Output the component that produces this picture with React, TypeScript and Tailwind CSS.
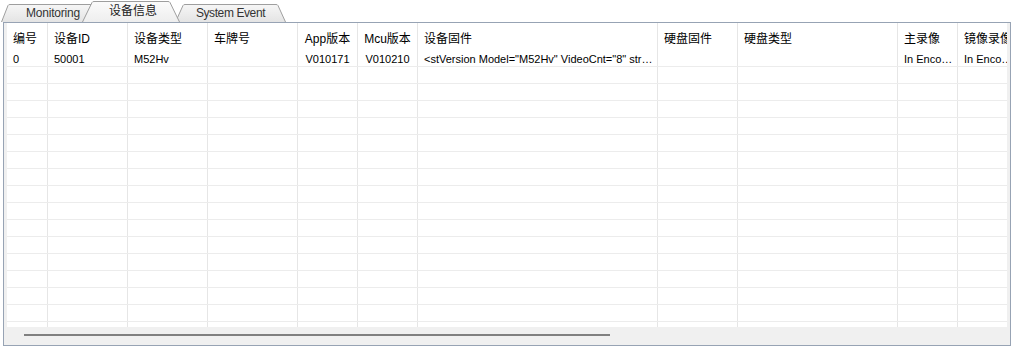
import React from "react";

type Col = { w: string; h: string; d: string; center?: boolean };

const cols: Col[] = [
  { w: "w-[41px]", h: "编号", d: "0" },
  { w: "w-[80px]", h: "设备ID", d: "50001" },
  { w: "w-[80px]", h: "设备类型", d: "M52Hv" },
  { w: "w-[90px]", h: "车牌号", d: "" },
  { w: "w-[60px]", h: "App版本", d: "V010171", center: true },
  { w: "w-[60px]", h: "Mcu版本", d: "V010210", center: true },
  { w: "w-[240px]", h: "设备固件", d: '<stVersion Model="M52Hv" VideoCnt="8" str…' },
  { w: "w-[80px]", h: "硬盘固件", d: "" },
  { w: "w-[160px]", h: "硬盘类型", d: "" },
  { w: "w-[60px]", h: "主录像", d: "In Enco…" },
  { w: "w-[80px]", h: "镜像录像", d: "In Enco…" },
];

function TabShape({ W, H, s, id, selected }: { W: number; H: number; s: number; id: string; selected?: boolean }) {
  const d = `M0.5 ${H} L${s} 1.5 Q${s + 0.5} 0.5 ${s + 2} 0.5 L${W - s - 2} 0.5 Q${W - s - 0.5} 0.5 ${W - s} 1.5 L${W - 0.5} ${H}`;
  return (
    <svg className="absolute inset-0" width={W} height={H} viewBox={`0 0 ${W} ${H}`}>
      <defs>
        <linearGradient id={id} x1="0" y1="0" x2="0" y2="1">
          <stop offset="0" stopColor={selected ? "#fbfbfb" : "#f6f6f6"} />
          <stop offset="1" stopColor={selected ? "#eeeeee" : "#e4e4e4"} />
        </linearGradient>
      </defs>
      <path d={d} fill={`url(#${id})`} stroke="#9e9e9e" strokeWidth="1" />
    </svg>
  );
}

export default function App() {
  const emptyRows = Array.from({ length: 17 });
  return (
    <div className="w-[1014px] h-[350px] bg-white overflow-hidden font-['Liberation_Sans','Noto_Sans_CJK_SC',sans-serif] text-black">
      {/* tab strip */}
      <div className="flex h-[22px] items-end pl-[1px]">
        <div className="relative w-[104px] h-[18px] z-0">
          <TabShape W={104} H={18} s={7} id="g1" />
          <div className="relative flex h-full items-center justify-center text-[12px] text-[#333] tracking-[-0.2px] leading-none">
            Monitoring
          </div>
        </div>
        <div className="relative w-[98px] h-[21px] -ml-[23px] z-20">
          <TabShape W={98} H={21} s={10} id="g2" selected />
          <div className="relative flex h-full items-center justify-center pl-[4px] pb-[1px] text-[12px] text-[#222] leading-none">
            设备信息
          </div>
        </div>
        <div className="relative w-[111px] h-[18px] -ml-[5px] z-10">
          <TabShape W={111} H={18} s={8} id="g3" />
          <div className="relative flex h-full items-center justify-center text-[12px] text-[#333] tracking-[-0.4px] leading-none">
            System Event
          </div>
        </div>
      </div>

      {/* frame */}
      <div className="ml-[3px] w-[1008px] h-[324px] border border-[#97a3b4] bg-[#f0f0f0] flex flex-col">
        <div className="mx-[3px] h-[304px] bg-white overflow-hidden">
          <div className="w-[1100px]">
            {/* header */}
            <div className="flex h-[27px]">
              {cols.map((c, i) => (
                <div
                  key={i}
                  className={`${c.w} shrink-0 h-full border-r border-[#e6e6e6] flex items-center pt-[4px] text-[12px] leading-[14px] whitespace-nowrap overflow-hidden ${c.center ? "justify-center" : "pl-[6px]"}`}
                >
                  {c.h}
                </div>
              ))}
            </div>
            {/* data row */}
            <div className="flex h-[17px] border-b border-[#ececec]">
              {cols.map((c, i) => (
                <div
                  key={i}
                  className={`${c.w} shrink-0 h-full border-r border-[#e6e6e6] flex items-center pt-[3px] text-[11px] leading-[13px] whitespace-nowrap overflow-hidden ${c.center ? "justify-center" : "pl-[6px]"}`}
                >
                  {c.d}
                </div>
              ))}
            </div>
            {emptyRows.map((_, r) => (
              <div key={r} className="flex h-[17px] border-b border-[#ececec]">
                {cols.map((c, i) => (
                  <div key={i} className={`${c.w} shrink-0 h-full border-r border-[#e6e6e6]`} />
                ))}
              </div>
            ))}
          </div>
        </div>
        <div className="h-[18px] pl-[20px] pt-[7px]">
          <div className="w-[586px] h-[2px] bg-[#808080]" />
        </div>
      </div>
    </div>
  );
}
